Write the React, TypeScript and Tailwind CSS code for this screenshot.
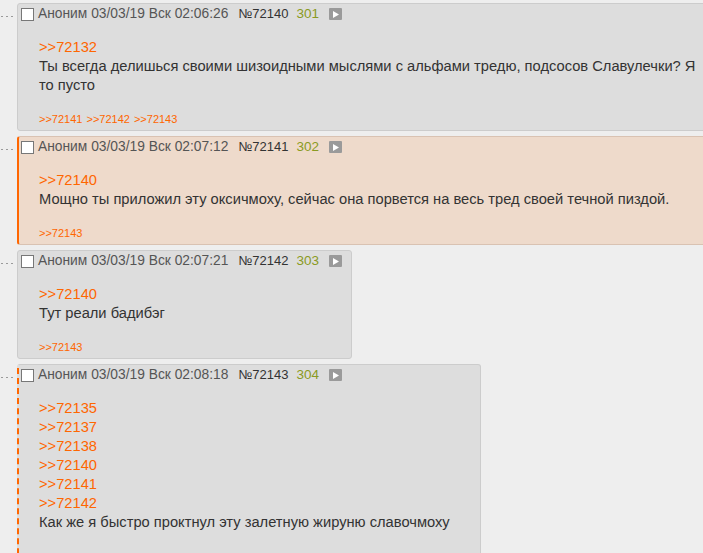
import React from 'react';

type Post = {
  num: number;
  time: string;
  idx: number;
  replies: number[];
  text: React.ReactNode;
  backlinks: number[];
  kind?: 'highlight' | 'dashed';
  wide?: boolean;
};

const posts: Post[] = [
  {
    num: 72140,
    time: '02:06:26',
    idx: 301,
    replies: [72132],
    text: (
      <>
        Ты всегда делишься своими шизоидными мыслями с альфами тредю, подсосов Славулечки? Я
        <br />
        то пусто
      </>
    ),
    backlinks: [72141, 72142, 72143],
    wide: true,
  },
  {
    num: 72141,
    time: '02:07:12',
    idx: 302,
    replies: [72140],
    text: 'Мощно ты приложил эту оксичмоху, сейчас она порвется на весь тред своей течной пиздой.',
    backlinks: [72143],
    kind: 'highlight',
    wide: true,
  },
  {
    num: 72142,
    time: '02:07:21',
    idx: 303,
    replies: [72140],
    text: 'Тут реали бадибэг',
    backlinks: [72143],
  },
  {
    num: 72143,
    time: '02:08:18',
    idx: 304,
    replies: [72135, 72137, 72138, 72140, 72141, 72142],
    text: 'Как же я быстро проктнул эту залетную жируню славочмоху',
    backlinks: [],
    kind: 'dashed',
  },
];

function PlayIcon() {
  return (
    <span className="inline-flex w-[13px] h-[12px] bg-[#9a9a9a] rounded-[1px] items-center justify-center">
      <svg width="6" height="7" viewBox="0 0 6 7">
        <path d="M0 0 L6 3.5 L0 7 Z" fill="#fff" />
      </svg>
    </span>
  );
}

function PostBox({ p }: { p: Post }) {
  const box =
    p.kind === 'highlight'
      ? 'bg-[#eedacb] border-[#d9c2b2] border-l-2 border-l-[#ff6600]'
      : p.kind === 'dashed'
        ? 'bg-[#dddddd] border-[#cccccc] border-l-2 border-l-[#ff6600] [border-left-style:dashed]'
        : 'bg-[#dddddd] border-[#cccccc]';

  return (
    <div className="flex items-start">
      <div className="w-[17px] shrink-0 flex gap-[3px] pl-[1px] pt-[13px]">
        <span className="w-[2px] h-px bg-[#9a9a9a]" />
        <span className="w-[2px] h-px bg-[#9a9a9a]" />
        <span className="w-[2px] h-px bg-[#9a9a9a]" />
      </div>
      <div
        className={`border rounded-[3px] pb-[3px] shrink-0 ${box} ${p.wide ? 'w-[720px]' : 'w-fit'} ${p.kind === 'highlight' || p.kind === 'dashed' ? 'pl-[2px]' : 'pl-[3px]'}`}
      >
        <div className="h-[20px] flex items-center pr-[9px] text-[13.8px] whitespace-nowrap">
          <span className="w-[13px] h-[13px] border border-[#777] bg-white mr-[4px]" />
          <span className="text-[#555]">Аноним 03/03/19 Вск {p.time}</span>
          <span className="text-[#333] ml-[10px] text-[13px]">№{p.num}</span>
          <span className="text-[#8a9a22] ml-[8px] text-[13.5px]">{p.idx}</span>
          <span className="ml-[10px] flex">
            <PlayIcon />
          </span>
        </div>
        <div className="mt-[14px] ml-[18px] mr-[30px] text-[14.7px] leading-[19px] text-[#333]">
          {p.replies.map((r) => (
            <div key={r} className="text-[#ff6600]">
              &gt;&gt;{r}
            </div>
          ))}
          <div className="whitespace-nowrap">{p.text}</div>
        </div>
        {p.backlinks.length > 0 ? (
          <div className="mt-[16px] mx-[18px] text-[11px] leading-[16px] text-[#ff6600] flex gap-[4px]">
            {p.backlinks.map((b) => (
              <span key={b}>&gt;&gt;{b}</span>
            ))}
          </div>
        ) : (
          <div className="h-[34px]" />
        )}
      </div>
    </div>
  );
}

export default function App() {
  return (
    <div
      className="min-h-screen w-[703px] overflow-hidden bg-[#eeeeee] pt-[3px] flex flex-col gap-[5px]"
      style={{ fontFamily: '"Liberation Sans", Arial, sans-serif' }}
    >
      {posts.map((p) => (
        <PostBox key={p.num} p={p} />
      ))}
    </div>
  );
}
